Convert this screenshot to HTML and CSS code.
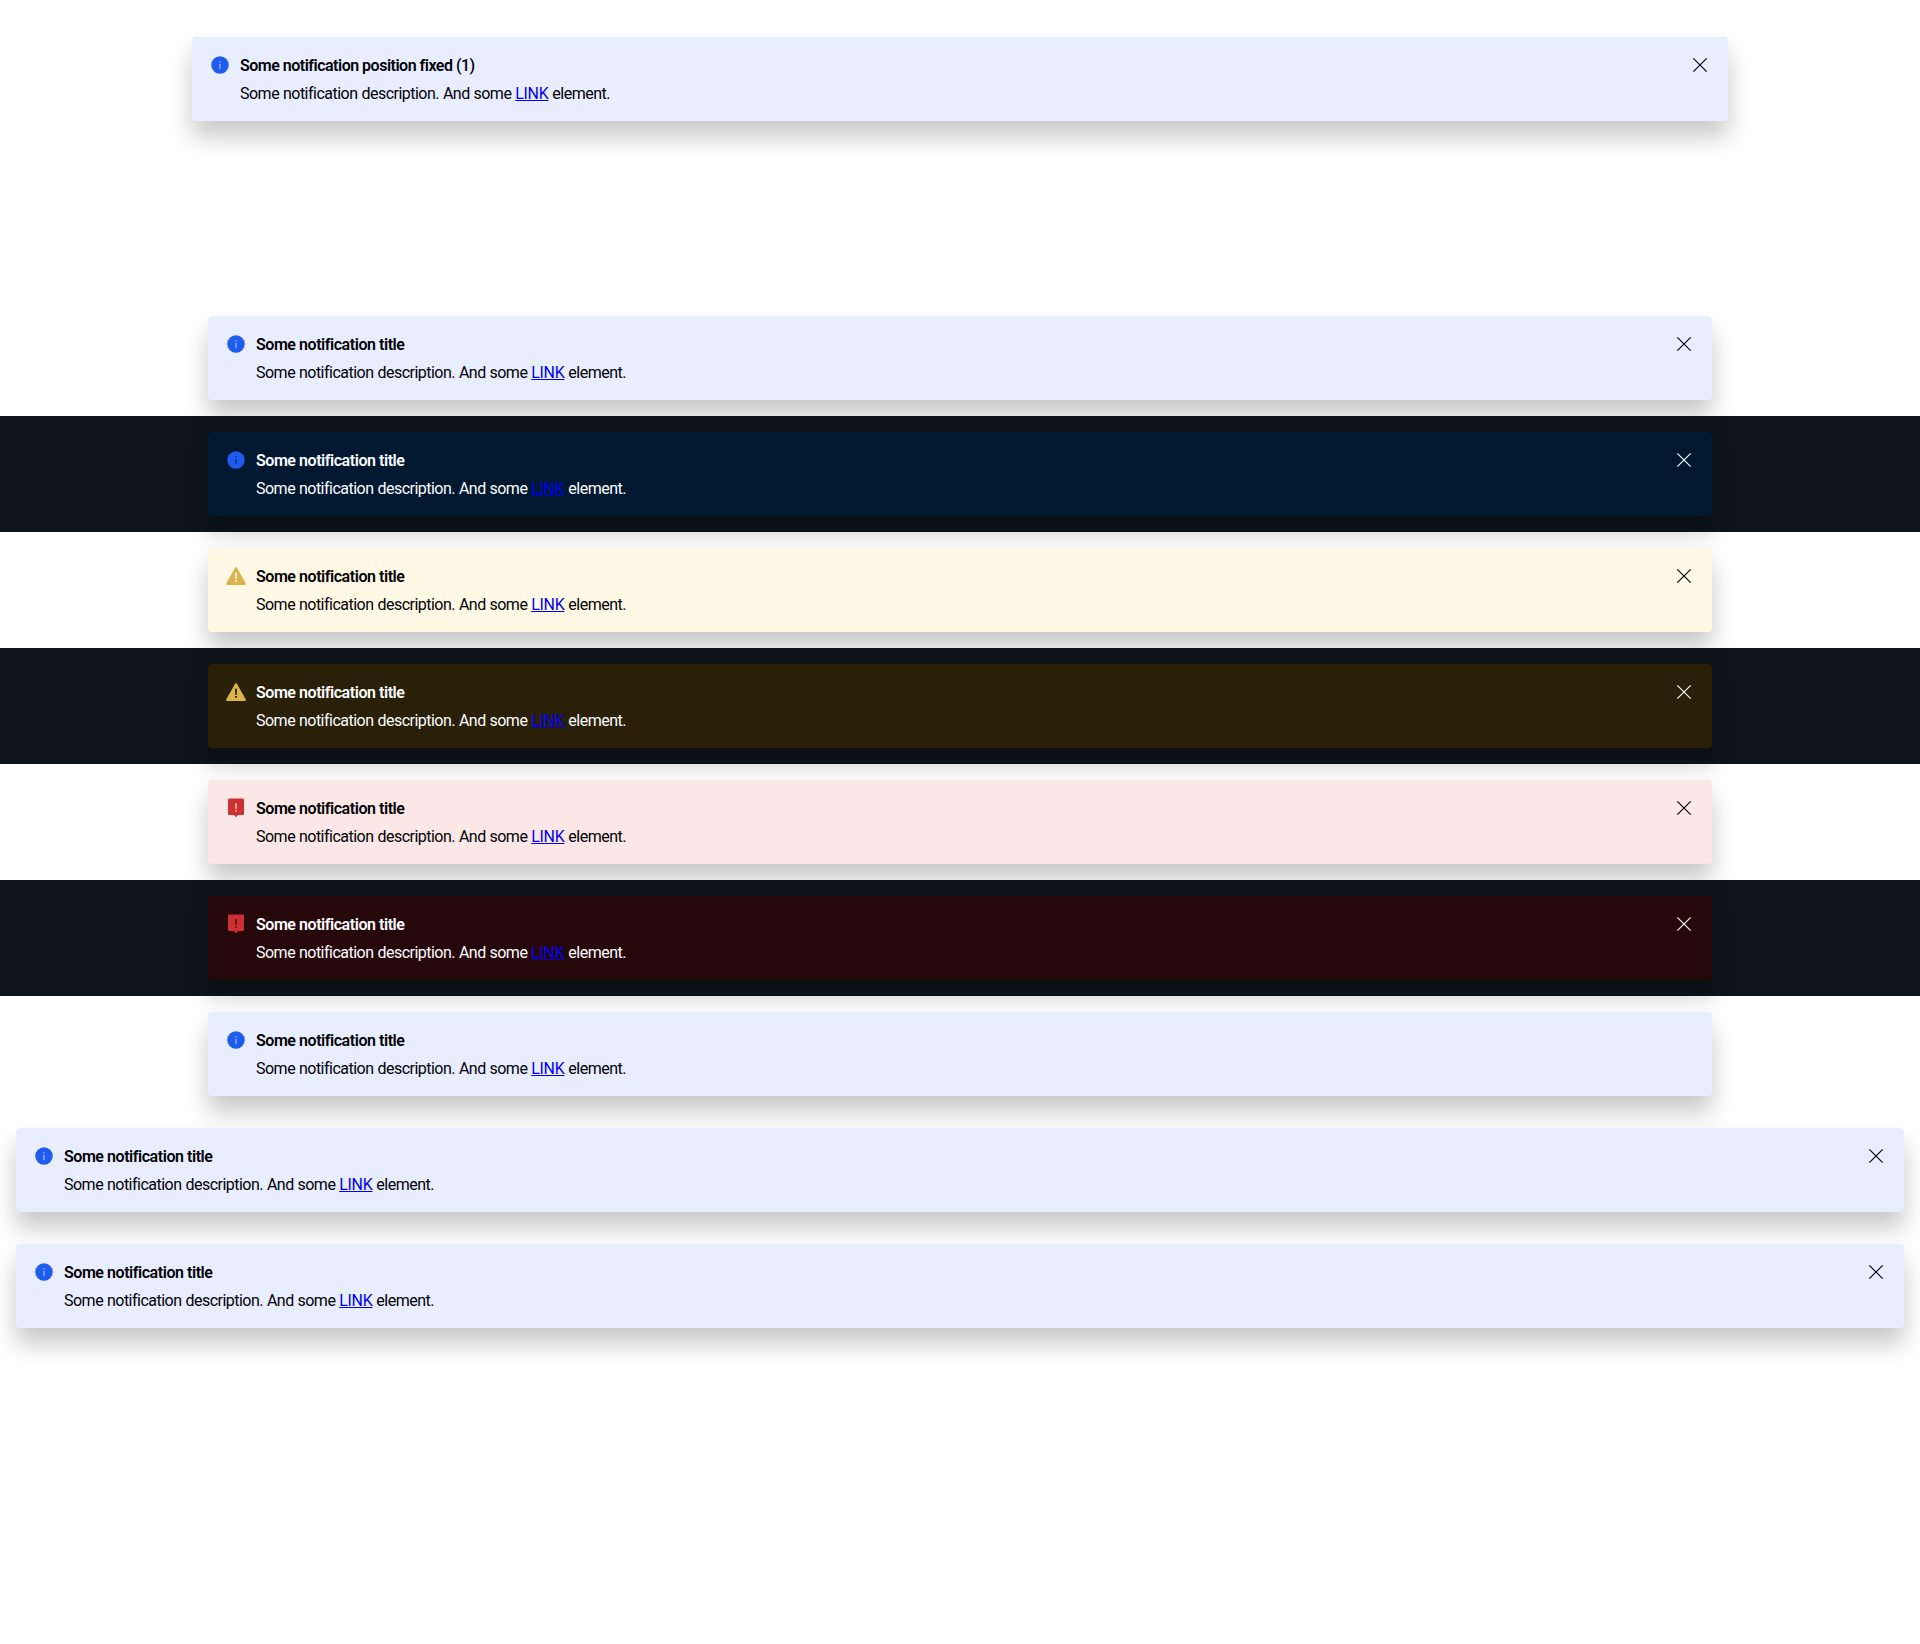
FILE: index.html
```
<!DOCTYPE html>
<html lang="en">
<head>
<meta charset="utf-8">
<title>Banner</title>
<link rel="stylesheet" href="styles.css">
</head>
<body>
<svg class="defs" width="0" height="0">
  <symbol id="info" viewBox="0 0 24 24"><path fill-rule="evenodd" d="M12 3.25a8.75 8.75 0 1 0 0 17.5 8.75 8.75 0 0 0 0-17.5zM11.45 8.2h1v1.1h-1zM11.55 10.7h.8V16.2h-.8z"/></symbol>
  <symbol id="warning" viewBox="0 0 24 24"><path fill-rule="evenodd" d="M11.2 3.6Q12 2.7 12.8 3.6L21.8 19.6Q22.3 21 21 21H3Q1.7 21 2.2 19.6zM11 8.8h2l-.3 6.2h-1.4zM11.2 16h1.6v2h-1.6z"/></symbol>
  <symbol id="error" viewBox="0 0 24 24"><path fill-rule="evenodd" d="M5.2 2.5H18.8Q20 2.5 20 3.7V17.8Q20 19 18.8 19H14L12 21.2 10 19H5.2Q4 19 4 17.8V3.7Q4 2.5 5.2 2.5zM11.3 7.3h1.4l-.2 5.7h-1zM11.4 14.3h1.2v1.5h-1.2z"/></symbol>
  <symbol id="close" viewBox="0 0 24 24"><path d="M5.3 5.3L18.7 18.7M18.7 5.3L5.3 18.7" fill="none" stroke="currentColor" stroke-width="1.15"/></symbol>
</svg>
<main class="page">
  <section class="hero"><div class="banner info"><svg class="icon"><use href="#info"/></svg><div class="content"><h5 class="title">Some notification position fixed <span class="count">(1)</span></h5><p class="text">Some notification description. And some <a href="#">LINK</a> element.</p></div><button class="close" aria-label="Close"><svg><use href="#close"/></svg></button></div></section>
  <section class="row"><div class="banner info"><svg class="icon"><use href="#info"/></svg><div class="content"><h5 class="title">Some notification title</h5><p class="text">Some notification description. And some <a href="#">LINK</a> element.</p></div><button class="close" aria-label="Close"><svg><use href="#close"/></svg></button></div></section>
  <section class="row dark"><div class="banner info"><svg class="icon"><use href="#info"/></svg><div class="content"><h5 class="title">Some notification title</h5><p class="text">Some notification description. And some <a href="#">LINK</a> element.</p></div><button class="close" aria-label="Close"><svg><use href="#close"/></svg></button></div></section>
  <section class="row"><div class="banner warning"><svg class="icon"><use href="#warning"/></svg><div class="content"><h5 class="title">Some notification title</h5><p class="text">Some notification description. And some <a href="#">LINK</a> element.</p></div><button class="close" aria-label="Close"><svg><use href="#close"/></svg></button></div></section>
  <section class="row dark"><div class="banner warning"><svg class="icon"><use href="#warning"/></svg><div class="content"><h5 class="title">Some notification title</h5><p class="text">Some notification description. And some <a href="#">LINK</a> element.</p></div><button class="close" aria-label="Close"><svg><use href="#close"/></svg></button></div></section>
  <section class="row"><div class="banner error"><svg class="icon"><use href="#error"/></svg><div class="content"><h5 class="title">Some notification title</h5><p class="text">Some notification description. And some <a href="#">LINK</a> element.</p></div><button class="close" aria-label="Close"><svg><use href="#close"/></svg></button></div></section>
  <section class="row dark"><div class="banner error"><svg class="icon"><use href="#error"/></svg><div class="content"><h5 class="title">Some notification title</h5><p class="text">Some notification description. And some <a href="#">LINK</a> element.</p></div><button class="close" aria-label="Close"><svg><use href="#close"/></svg></button></div></section>
  <section class="row"><div class="banner info"><svg class="icon"><use href="#info"/></svg><div class="content"><h5 class="title">Some notification title</h5><p class="text">Some notification description. And some <a href="#">LINK</a> element.</p></div></div></section>
  <section class="row wide"><div class="banner info"><svg class="icon"><use href="#info"/></svg><div class="content"><h5 class="title">Some notification title</h5><p class="text">Some notification description. And some <a href="#">LINK</a> element.</p></div><button class="close" aria-label="Close"><svg><use href="#close"/></svg></button></div></section>
  <section class="row wide"><div class="banner info"><svg class="icon"><use href="#info"/></svg><div class="content"><h5 class="title">Some notification title</h5><p class="text">Some notification description. And some <a href="#">LINK</a> element.</p></div><button class="close" aria-label="Close"><svg><use href="#close"/></svg></button></div></section>
</main>
</body>
</html>
```
FILE: styles.css
```
* { box-sizing: border-box; }
body { margin: 0; background: #fff; font-family: Roboto, "Liberation Sans", sans-serif; font-size: 16px; line-height: 24px; }
.defs { display: block; }
.page { min-height: 1644px; }
.hero { height: 300px; padding: 37px 192px 0; }
.row { padding: 16px 208px; }
.row.wide { padding: 16px; }
.row.dark { background: #0e1418; }
.banner { display: flex; gap: 8px; height: 84px; padding: 16px; border-radius: 4px; color: #010205; box-shadow: 0 16px 24px rgba(0, 0, 0, .22); position: relative; }
.icon { flex: none; width: 24px; height: 24px; fill: currentColor; }
.content { flex: 1; padding-top: 1px; }
.title, .text { margin: 0; font-size: 16px; white-space: nowrap; }
.title { margin-bottom: 4px; font-weight: 600; letter-spacing: -.45px; }
.hero .title { letter-spacing: -.5px; }
.count { font-weight: 500; letter-spacing: -.5px; }
.text { font-weight: 400; letter-spacing: -.51px; word-spacing: .4px; }
.text a { color: #00e; letter-spacing: -.3px; }
.close { width: 24px; height: 24px; padding: 0; border: 0; background: none; color: inherit; }
.close svg { display: block; width: 24px; height: 24px; }
.info { background: #e8edff; }
.warning { background: #fff8e5; }
.error { background: #fce7e7; }
.info .icon { color: #1e5bef; }
.warning .icon { color: #dcb34c; }
.error .icon { color: #cc3031; }
.dark .banner { color: #fbfcff; }
.dark .info { background: #001930; }
.dark .warning { background: #2a2008; }
.dark .error { background: #27080a; }
```
